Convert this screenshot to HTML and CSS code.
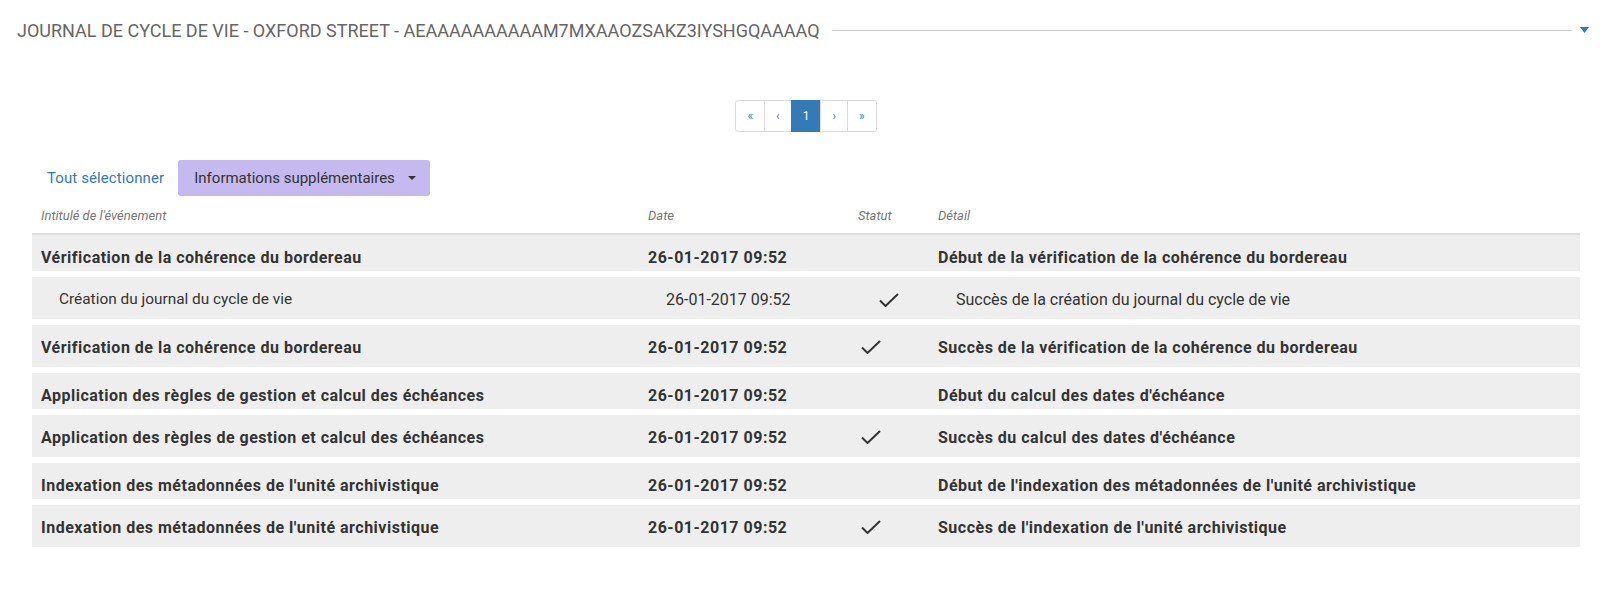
FILE: index.html
```html
<!DOCTYPE html>
<html lang="fr">
<head>
<meta charset="utf-8">
<title>Journal de cycle de vie</title>
<link rel="stylesheet" href="styles.css">
</head>
<body>
<div class="page">
  <header class="panel-head">
    <h1 class="title">JOURNAL DE CYCLE DE VIE - OXFORD STREET - AEAAAAAAAAAAM7MXAAOZSAKZ3IYSHGQAAAAQ</h1>
    <span class="rule"></span>
    <svg class="toggle" viewBox="0 0 9 6"><path d="M0 0 H9 L4.5 6 Z"/></svg>
  </header>

  <nav class="pager">
    <a class="pg">«</a><a class="pg">‹</a><a class="pg active">1</a><a class="pg">›</a><a class="pg">»</a>
  </nav>

  <div class="toolbar">
    <a class="link">Tout sélectionner</a>
    <button class="btn-extra">Informations supplémentaires <span class="caret"></span></button>
  </div>

  <div class="events">
    <div class="row head">
      <span>Intitulé de l'événement</span><span>Date</span><span>Statut</span><span>Détail</span>
    </div>

    <div class="row main">
      <span>Vérification de la cohérence du bordereau</span><span>26-01-2017 09:52</span><span class="st"></span><span>Début de la vérification de la cohérence du bordereau</span>
    </div>
    <div class="row sub ok">
      <span class="label">Création du journal du cycle de vie</span><span>26-01-2017 09:52</span><span class="st"><svg class="check" viewBox="0 0 20 14"><path d="M1 7.5 L6.5 13 L19 1"/></svg></span><span>Succès de la création du journal du cycle de vie</span>
    </div>
    <div class="row main ok">
      <span>Vérification de la cohérence du bordereau</span><span>26-01-2017 09:52</span><span class="st"><svg class="check" viewBox="0 0 20 14"><path d="M1 7.5 L6.5 13 L19 1"/></svg></span><span>Succès de la vérification de la cohérence du bordereau</span>
    </div>
    <div class="row main">
      <span>Application des règles de gestion et calcul des échéances</span><span>26-01-2017 09:52</span><span class="st"></span><span>Début du calcul des dates d'échéance</span>
    </div>
    <div class="row main ok">
      <span>Application des règles de gestion et calcul des échéances</span><span>26-01-2017 09:52</span><span class="st"><svg class="check" viewBox="0 0 20 14"><path d="M1 7.5 L6.5 13 L19 1"/></svg></span><span>Succès du calcul des dates d'échéance</span>
    </div>
    <div class="row main">
      <span>Indexation des métadonnées de l'unité archivistique</span><span>26-01-2017 09:52</span><span class="st"></span><span>Début de l'indexation des métadonnées de l'unité archivistique</span>
    </div>
    <div class="row main ok">
      <span>Indexation des métadonnées de l'unité archivistique</span><span>26-01-2017 09:52</span><span class="st"><svg class="check" viewBox="0 0 20 14"><path d="M1 7.5 L6.5 13 L19 1"/></svg></span><span>Succès de l'indexation de l'unité archivistique</span>
    </div>
  </div>
</div>
</body>
</html>
```

FILE: styles.css
```css
* { box-sizing: border-box; }
body {
  margin: 0;
  font-family: Roboto, "Liberation Sans", sans-serif;
  color: #333;
  background: #fff;
}
.page { padding: 0 30px 0 32px; }

.panel-head {
  display: flex;
  align-items: center;
  height: 60px;
  margin: 0 -10px 0 -15px;
  padding-right: 1px;
}
.title {
  margin: 0;
  font-size: 18px;
  font-weight: 400;
  color: #666;
  white-space: nowrap;
}
.rule {
  flex: 1;
  height: 1px;
  background: #ccc;
  margin: 0 8px 0 12px;
}
.toggle {
  flex: none;
  width: 9px;
  height: 6px;
  fill: #337ab7;
}

.pager {
  display: flex;
  justify-content: center;
  margin-top: 40px;
}
.pg {
  display: block;
  font-size: 12px;
  line-height: 18px;
  padding: 6px 11px;
  color: #337ab7;
  border: 1px solid #ddd;
  margin-left: -1px;
}
.pg:first-child { border-radius: 3px 0 0 3px; margin-left: 0; }
.pg:last-child { border-radius: 0 3px 3px 0; }
.pg.active { background: #337ab7; border-color: #337ab7; color: #fff; }

.toolbar {
  display: flex;
  align-items: center;
  margin-top: 28px;
  padding-left: 15px;
}
.link { color: #337ab7; font-size: 15px; letter-spacing: 0.1px; }
.btn-extra {
  margin-left: 14px;
  height: 36px;
  padding: 0 14px 0 16px;
  font-family: inherit;
  font-size: 15px;
  color: #333;
  background: #c5b9ef;
  border: none;
  border-radius: 3px;
  display: flex;
  align-items: center;
  gap: 13px;
}
.caret {
  width: 0; height: 0;
  border-left: 4px solid transparent;
  border-right: 4px solid transparent;
  border-top: 4px solid #333;
}

.row {
  display: grid;
  grid-template-columns: 607px 210px 80px 1fr;
  align-items: center;
  padding-left: 9px;
}
.row.head {
  font-size: 13px;
  font-style: italic;
  color: #777;
  height: 39px;
  border-bottom: 2px solid #ddd;
  padding-top: 1px;
}
.row.main, .row.sub {
  align-items: start;
  background: #eee;
  height: 36px;
  padding-top: 13px;
  margin-top: 6px;
  font-size: 16px;
  line-height: 19px;
}
.row.head + .row { margin-top: 0; }
.row.main { font-weight: 700; letter-spacing: 0.5px; }
.row.sub { padding-left: 27px; }
.row.sub .label { font-size: 15.4px; }
.row.ok { height: 42px; }
.st { display: flex; padding-left: 3px; padding-top: 2px; }
.row.sub .st { padding-top: 3px; }
.check { width: 20px; height: 14px; fill: none; stroke: #333; stroke-width: 2; }
```
